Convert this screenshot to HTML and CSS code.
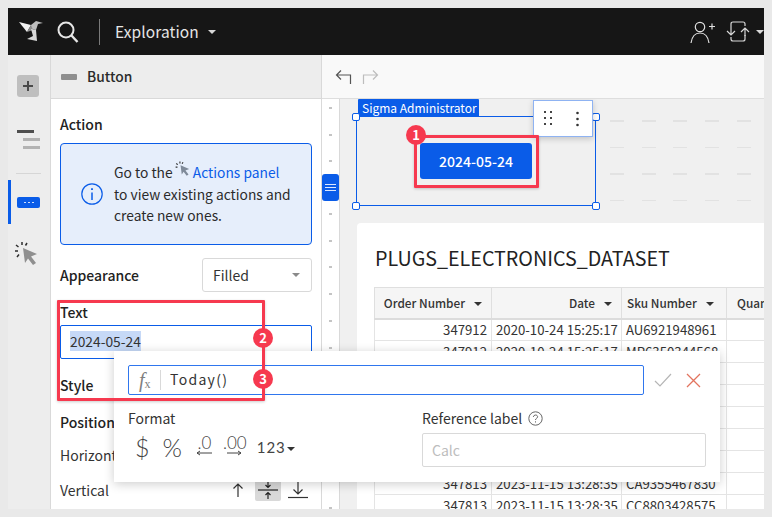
FILE: index.html
```html
<!DOCTYPE html>
<html lang="en">
<head>
  <meta charset="UTF-8" />
  <title>Exploration</title>
  <link rel="stylesheet" href="styles.css">
</head>
<body>
  <div class="app">

    <header class="topbar">
      <svg class="logo" width="25" height="22" viewBox="0 0 25 22">
        <path d="M0 2 L12 5 L8 12 Z" fill="#f2f2f2"/>
        <path d="M12 5 L17 1 L24 3 L19 4 L17 10 L12 9 Z" fill="#bdbdbd"/>
        <path d="M8 12 L12 5 L14 10 Z" fill="#8c8c8c"/>
        <path d="M12 9 L17 10 L18 21 L8 19 L14 16 Z" fill="#d9d9d9"/>
      </svg>
      <svg class="search" width="22" height="24" viewBox="0 0 22 24" fill="none" stroke="#e6e6e6" stroke-width="2">
        <circle cx="9" cy="9" r="7.5"/>
        <path d="M14.5 14.5 L20.5 21" stroke-width="2.4"/>
      </svg>
      <span class="topbar-sep"></span>
      <span class="doc-title">Exploration</span>
      <span class="caret caret-light"></span>
      <span class="topbar-right">
        <svg width="27" height="24" viewBox="0 0 27 24" fill="none" stroke="#e0e0e0" stroke-width="1.2">
          <circle cx="10" cy="7" r="4.7"/>
          <path d="M1 23 C2 16 6 13 10 13 C14 13 18 16 19 23"/>
          <path d="M19 6.5 H25 M22 3.5 V9.5"/>
        </svg>
        <svg class="sync-icon" width="24" height="22" viewBox="0 0 24 22" fill="none" stroke="#d8d8d8" stroke-width="1.2">
          <path d="M5 6 V3 Q5 1 7 1 H17 Q19 1 19 3 V5"/>
          <path d="M19 14 V18 Q19 20 17 20 H7 Q5 20 5 18 V16"/>
          <path d="M1 10 L5 14 L9 10 M5 14 V6"/>
          <path d="M15 11 L19 7 L23 11 M19 7 V15"/>
        </svg>
        <span class="caret caret-light"></span>
      </span>
    </header>

    <div class="main">
      <nav class="rail">
        <div class="rail-add">
          <svg width="12" height="12" viewBox="0 0 12 12"><path d="M6 1 V11 M1 6 H11" stroke="#4a4a4a" stroke-width="2"/></svg>
        </div>
        <div class="rail-outline">
          <span class="line-dark"></span>
          <span class="line-grey"></span>
          <span class="line-grey"></span>
        </div>
        <div class="rail-divider"></div>
        <div class="rail-active">
          <span class="rail-button"><i></i><i></i><i></i></span>
        </div>
        <svg class="rail-click" width="24" height="26" viewBox="0 0 24 26">
          <path d="M8 7 L22 13 L16 15.5 L21 22 L18 24 L13 17.5 L10 22 Z" fill="#8f8f8f"/>
          <path d="M7 1 V4 M1 4 L3.5 6 M0 10 H3 M2 16 L4 13.5 M12 2 L10.5 4.5" stroke="#2e2e2e" stroke-width="1.5" fill="none"/>
        </svg>
      </nav>

      <aside class="panel">
        <div class="panel-head">
          <span class="panel-head-icon"></span>
          <span class="panel-head-title">Button</span>
        </div>
        <div class="panel-body">
          <div class="label label-action">Action</div>
          <div class="info-box">
            <svg class="info-icon" width="22" height="22" viewBox="0 0 22 22" fill="none" stroke="#0a5ce8" stroke-width="1.2">
              <circle cx="11" cy="11" r="10.2"/>
              <path d="M11 9.5 V17" stroke-width="1.5"/>
              <path d="M11 5.2 V7" stroke-width="1.8"/>
            </svg>
            <div class="info-text">
              Go to the
              <svg class="inline-click" width="16" height="16" viewBox="0 0 24 26">
                <path d="M8 7 L22 13 L16 15.5 L21 22 L18 24 L13 17.5 L10 22 Z" fill="#7f8a99"/>
                <path d="M7 1 V4 M1 4 L3.5 6 M0 10 H3 M12 2 L10.5 4.5" stroke="#2e2e2e" stroke-width="1.8" fill="none"/>
              </svg>
              <span class="link">Actions panel</span><br>
              to view existing actions and<br>
              create new ones.
            </div>
          </div>
          <div class="row row-appearance">
            <span class="label">Appearance</span>
            <div class="select">Filled<span class="caret caret-grey"></span></div>
          </div>
          <div class="label label-text">Text</div>
          <div class="text-input"><span class="selected">2024-05-24</span></div>
          <div class="label label-style">Style</div>
          <div class="label label-position">Position</div>
          <div class="row row-horizontal"><span class="plain">Horizontal</span></div>
          <div class="row row-vertical">
            <span class="plain">Vertical</span>
            <span class="align-icons">
              <span class="align-btn">
                <svg width="14" height="16" viewBox="0 0 14 16" fill="none" stroke="#333" stroke-width="1.2"><path d="M7 15 V2 M2.5 6.5 L7 2 L11.5 6.5"/></svg>
              </span>
              <span class="align-btn align-on">
                <svg width="20" height="20" viewBox="0 0 20 20" fill="none" stroke="#222" stroke-width="1.2"><path d="M0 10 H20"/><path d="M10 1 V7 M7.5 5 L10 7.5 L12.5 5"/><path d="M10 19 V13 M7.5 15 L10 12.5 L12.5 15"/></svg>
              </span>
              <span class="align-btn">
                <svg width="20" height="18" viewBox="0 0 20 18" fill="none" stroke="#333" stroke-width="1.2"><path d="M0 16.5 H20"/><path d="M10 1 V13 M5.5 8.5 L10 13 L14.5 8.5"/></svg>
              </span>
            </span>
          </div>
        </div>
      </aside>

      <section class="content">
        <div class="toolbar">
          <svg width="17" height="16" viewBox="0 0 17 16" fill="none" stroke="#555" stroke-width="1.2"><path d="M6 1.5 L1.5 6 L6 10.5 M1.5 6 H15.5 V15"/></svg>
          <svg width="17" height="16" viewBox="0 0 17 16" fill="none" stroke="#bdbdbd" stroke-width="1.2"><path d="M11 1.5 L15.5 6 L11 10.5 M15.5 6 H1.5 V15"/></svg>
        </div>
        <div class="work">
          <div class="strip">
            <i></i><i></i><i></i>
            <span class="strip-btn"><b></b><b></b><b></b></span>
            <i></i><i></i><i></i><i></i><i></i><i></i><i></i><i></i><i></i><i></i><i></i><i></i><i></i><i></i>
          </div>
          <div class="canvas">
            <div class="top-row">
              <div class="element">
                <span class="element-tag">Sigma Administrator</span>
                <span class="handle h-tl"></span><span class="handle h-tr"></span>
                <span class="handle h-bl"></span><span class="handle h-br"></span>
                <div class="element-tools">
                  <svg width="9" height="16" viewBox="0 0 9 16" fill="#444"><rect x="0" y="0" width="2" height="2"/><rect x="6" y="0" width="2" height="2"/><rect x="0" y="6" width="2" height="2"/><rect x="6" y="6" width="2" height="2"/><rect x="0" y="12" width="2" height="2"/><rect x="6" y="12" width="2" height="2"/></svg>
                  <svg width="3" height="16" viewBox="0 0 3 16" fill="#333"><circle cx="1.5" cy="2" r="1.3"/><circle cx="1.5" cy="8" r="1.3"/><circle cx="1.5" cy="14" r="1.3"/></svg>
                </div>
                <button class="date-button">2024-05-24</button>
              </div>
              <div class="grid-dashes">
                <i></i><i></i><i></i><i></i><i></i>
                <i></i><i></i><i></i><i></i><i></i>
                <i></i><i></i><i></i><i></i><i></i>
                <i></i><i></i><i></i><i></i><i></i>
              </div>
            </div>

            <div class="card">
              <h2 class="card-title">PLUGS_ELECTRONICS_DATASET</h2>
              <table class="data">
                <colgroup>
                  <col class="c-order"><col class="c-date"><col class="c-sku"><col class="c-qty">
                </colgroup>
                <thead>
                  <tr>
                    <th class="num">Order Number<span class="caret caret-dark"></span></th>
                    <th class="num">Date<span class="caret caret-dark"></span></th>
                    <th>Sku Number<span class="caret caret-dark"></span></th>
                    <th class="qty">Quantity</th>
                  </tr>
                </thead>
                <tbody>
                  <tr><td class="num">347912</td><td class="num">2020-10-24 15:25:17</td><td>AU6921948961</td><td></td></tr>
                  <tr><td class="num">347912</td><td class="num">2020-10-24 15:25:17</td><td>MP6350344568</td><td></td></tr>
                  <tr><td></td><td></td><td></td><td></td></tr>
                  <tr><td></td><td></td><td></td><td></td></tr>
                  <tr><td></td><td></td><td></td><td></td></tr>
                  <tr><td></td><td></td><td></td><td></td></tr>
                  <tr><td></td><td></td><td></td><td></td></tr>
                  <tr><td class="num">347813</td><td class="num">2023-11-15 13:28:35</td><td>CA9355467830</td><td></td></tr>
                  <tr><td class="num">347813</td><td class="num">2023-11-15 13:28:35</td><td>CC8803428575</td><td></td></tr>
                </tbody>
              </table>
            </div>
          </div>
        </div>
      </section>
    </div>

    <!-- formula popup sits over the panel and the table -->
    <div class="popup">
      <div class="formula-row">
        <div class="formula">
          <span class="fx">f<sub>x</sub></span>
          <span class="formula-text">Today()</span>
        </div>
        <svg class="check" width="18" height="14" viewBox="0 0 18 14" fill="none" stroke="#b5b5b5" stroke-width="1.2"><path d="M1 8 L6 13 L17 1"/></svg>
        <svg class="cancel" width="15" height="15" viewBox="0 0 15 15" fill="none" stroke="#e2745f" stroke-width="1.3"><path d="M1 1 L14 14 M14 1 L1 14"/></svg>
      </div>
      <div class="popup-cols">
        <div class="format-col">
          <div class="popup-label">Format</div>
          <div class="format-icons">
            <span class="fmt fmt-dollar">$</span>
            <span class="fmt fmt-percent">%</span>
            <span class="fmt-dec fmt-dec-one">.0
              <svg width="17" height="6" viewBox="0 0 17 6" fill="none" stroke="#444"><path d="M4 1 L1 3 L4 5 M1 3 H16"/></svg>
            </span>
            <span class="fmt-dec fmt-dec-two">.00
              <svg width="15" height="6" viewBox="0 0 15 6" fill="none" stroke="#444"><path d="M11 1 L14 3 L11 5 M14 3 H0"/></svg>
            </span>
            <span class="fmt-num">123<span class="caret caret-dark"></span></span>
          </div>
        </div>
        <div class="ref-col">
          <div class="popup-label">Reference label
            <svg class="help" width="15" height="15" viewBox="0 0 15 15" fill="none" stroke="#666"><circle cx="7.5" cy="7.5" r="6.7"/><path d="M5.4 6 C5.4 3.4 9.6 3.4 9.6 5.8 C9.6 7.4 7.5 7.2 7.5 9"/><path d="M7.5 10.3 V11.5"/></svg>
          </div>
          <div class="ref-input">Calc</div>
        </div>
      </div>
    </div>

    <!-- red callouts drawn on top of the screenshot -->
    <div class="callout callout-one"></div>
    <div class="callout callout-two"></div>
    <span class="badge badge-one">1</span>
    <span class="badge badge-two">2</span>
    <span class="badge badge-three">3</span>
  </div>
</body>
</html>
```

FILE: styles.css
```css
* {
  box-sizing: border-box;
}

body {
  margin: 8px;
  background: #e9e9e9;
  font-family: "Noto Sans CJK SC", "Noto Sans", sans-serif;
  color: #2b2b2b;
  font-size: 14px;
}

.app {
  position: relative;
  width: 756px;
  height: 501px;
  overflow: hidden;
  background: #fff;
  display: flex;
  flex-direction: column;
  box-shadow: 0 1px 3px rgba(0,0,0,0.12);
}

/* carets */
.caret {
  display: inline-block;
  width: 0;
  height: 0;
  border-left: 4px solid transparent;
  border-right: 4px solid transparent;
  border-top: 4px solid #333;
}

.caret-light { border-top-color: #d8d8d8; }
.caret-grey { border-top-color: #8a8a8a; }
.caret-dark { border-top-color: #333; }

/* top bar */
.topbar {
  height: 47px;
  flex: none;
  background: #161616;
  display: flex;
  align-items: center;
  color: #e6e6e6;
  padding-left: 11px;
}

.logo { margin-top: -1px; }

.search {
  margin-left: 13px;
  margin-top: 2px;
}

.topbar-sep {
  width: 1px;
  height: 26px;
  background: #7a7a7a;
  margin-left: 20px;
}

.doc-title {
  font-size: 15.5px;
  line-height: 20px;
  margin-left: 15px;
  margin-top: -2px;
  letter-spacing: 0.1px;
}

.doc-title + .caret {
  margin-left: 9px;
}

.topbar-right {
  margin-left: auto;
  display: flex;
  align-items: center;
}

.sync-icon { margin-left: 9px; }

.topbar-right .caret { margin-left: 6px; }

/* main row */
.main {
  flex: 1;
  display: flex;
  min-height: 0;
}

/* left rail */
.rail {
  width: 43px;
  flex: none;
  background: #ededed;
  border-right: 1px solid #d9d9d9;
  display: flex;
  flex-direction: column;
  align-items: flex-start;
  padding-top: 20px;
}

.rail-add {
  width: 22px;
  height: 22px;
  margin-left: 9px;
  background: #bfbfbf;
  border-radius: 3px;
  display: flex;
  align-items: center;
  justify-content: center;
}

.rail-outline {
  margin-left: 9px;
  margin-top: 33px;
  width: 23px;
  display: flex;
  flex-direction: column;
  gap: 5px;
}

.line-dark {
  width: 17px;
  height: 3px;
  background: #4f4f4f;
}

.line-grey {
  width: 17px;
  height: 3px;
  margin-left: 6px;
  background: #b3b3b3;
}

.rail-divider {
  width: 25px;
  height: 1px;
  background: #d6d6d6;
  margin: 24px 0 0 8px;
}

.rail-active {
  margin-top: 6px;
  width: 100%;
  height: 44px;
  border-left: 3px solid #0a5ce8;
  display: flex;
  align-items: center;
  padding-left: 6px;
}

.rail-button {
  width: 23px;
  height: 11px;
  background: #0a5ce8;
  border-radius: 2px;
  display: flex;
  align-items: center;
  justify-content: center;
  gap: 2px;
}

.rail-button i {
  width: 2px;
  height: 1px;
  background: #cfe0ff;
}

.rail-click {
  margin: 17px 0 0 7px;
}

/* settings panel */
.panel {
  width: 271px;
  flex: none;
  border-right: 1px solid #d9d9d9;
  display: flex;
  flex-direction: column;
}

.panel-head {
  height: 44px;
  flex: none;
  background: #ededed;
  border-bottom: 1px solid #d9d9d9;
  display: flex;
  align-items: center;
  padding-left: 10px;
}

.panel-head-icon {
  width: 16px;
  height: 6px;
  background: #8f8f8f;
  border-radius: 1px;
}

.panel-head-title {
  margin-left: 10px;
  margin-top: -1px;
  font-weight: 500;
  font-size: 13.8px;
}

.panel-body {
  flex: 1;
  padding: 15px 9px 0 9px;
}

.label {
  font-weight: 500;
  font-size: 14px;
  line-height: 20px;
  color: #222;
}

.plain {
  font-size: 14px;
  line-height: 20px;
  color: #333;
}

.row {
  display: flex;
  align-items: center;
  justify-content: space-between;
}

.info-box {
  margin-top: 9px;
  height: 102px;
  background: #e6eefb;
  border: 1px solid #0a5ce8;
  border-radius: 4px;
  display: flex;
  align-items: center;
  padding-left: 20px;
}

.info-icon {
  flex: none;
}

.info-text {
  margin-left: 11px;
  font-size: 13.8px;
  line-height: 21.5px;
  color: #2b2b2b;
}

.inline-click {
  vertical-align: 1px;
  margin: 0 -1px;
}

.link {
  color: #0a5ce8;
}

.row-appearance {
  margin-top: 13px;
}

.select {
  width: 110px;
  height: 34px;
  border: 1px solid #d9d9d9;
  border-radius: 3px;
  display: flex;
  align-items: center;
  justify-content: space-between;
  padding: 0 11px 0 10px;
  color: #333;
}

.label-text {
  margin-top: 10px;
}

.text-input {
  margin-top: 3px;
  height: 34px;
  border: 1px solid #0a5ce8;
  border-radius: 2px;
  padding: 5px 9px;
  line-height: 20px;
  font-size: 13.8px;
}

.selected {
  background: #c6d9f7;
  display: inline-block;
  color: #333;
}

.label-style {
  margin-top: 16px;
}

.label-position {
  margin-top: 17px;
}

.row-horizontal {
  margin-top: 13px;
}

.row-vertical {
  margin-top: 11px;
  height: 28px;
}

.align-icons {
  display: flex;
  align-items: center;
  margin-right: 1px;
}

.align-btn {
  width: 26px;
  height: 22px;
  margin-left: 4px;
  display: flex;
  align-items: center;
  justify-content: center;
  border-radius: 2px;
}

.align-on {
  background: #d9d9d9;
}

/* right side */
.content {
  flex: 1;
  min-width: 0;
  display: flex;
  flex-direction: column;
}

.toolbar {
  height: 44px;
  flex: none;
  background: #f9f9f9;
  border-bottom: 1px solid #dedede;
  display: flex;
  align-items: center;
  gap: 10px;
  padding-left: 13px;
}

.work {
  flex: 1;
  min-height: 0;
  display: flex;
}

/* dotted strip between panel and canvas */
.strip {
  width: 18px;
  flex: none;
  overflow: hidden;
  border-right: 1px solid #d9d9d9;
  background: #fff;
  display: flex;
  flex-direction: column;
  align-items: center;
  padding-top: 8px;
}

.strip i {
  width: 3px;
  height: 2px;
  flex: none;
  background: #c4c4c4;
  margin-bottom: 24.7px;
}

.strip-btn {
  width: 17px;
  height: 27px;
  flex: none;
  margin: -13px 0 12px;
  background: #0a5ce8;
  border-radius: 3px;
  display: flex;
  flex-direction: column;
  align-items: center;
  justify-content: center;
  gap: 2px;
}

.strip-btn b {
  width: 11px;
  height: 1px;
  background: #dbe7ff;
}

.canvas {
  flex: 1;
  min-width: 0;
  overflow: hidden;
  background: #f0f0f0;
  padding: 17px 0 0 16px;
}

.top-row {
  display: flex;
}

.element {
  position: relative;
  width: 240px;
  height: 90px;
  border: 1px solid #0a5ce8;
  display: flex;
  align-items: flex-start;
  justify-content: center;
  padding-top: 26px;
}

.element-tag {
  position: absolute;
  left: 1px;
  top: -18px;
  height: 18px;
  width: 121px;
  background: #0a5ce8;
  color: #fff;
  font-size: 12px;
  line-height: 18px;
  padding-left: 4px;
  white-space: nowrap;
  border-radius: 1px 1px 0 0;
}

.handle {
  position: absolute;
  width: 8px;
  height: 8px;
  background: #fff;
  border: 1px solid #0a5ce8;
  border-radius: 2px;
}

.h-tl { left: -5px; top: -4px; }
.h-tr { right: -5px; top: -4px; }
.h-bl { left: -5px; bottom: -5px; }
.h-br { right: -5px; bottom: -5px; }

.element-tools {
  position: absolute;
  left: 176px;
  top: -17px;
  width: 60px;
  height: 37px;
  background: #fff;
  border: 1px solid #8fb3f2;
  box-shadow: 0 2px 6px rgba(0,0,0,0.18);
  display: flex;
  align-items: center;
  gap: 23px;
  padding-left: 10px;
}

.date-button {
  width: 112px;
  height: 36px;
  background: #0a5ce8;
  color: #fff;
  border: none;
  border-radius: 3px;
  font-family: inherit;
  font-size: 14px;
  font-weight: 500;
}

.grid-dashes {
  margin: 4px 0 0 14px;
  display: grid;
  grid-template-columns: repeat(5, 14px);
  column-gap: 17.7px;
  row-gap: 25px;
  align-content: start;
}

.grid-dashes i {
  height: 1.5px;
  background: #e2e2e2;
}

.card {
  margin: 17px 0 0 1px;
  background: #fff;
  border-radius: 4px 0 0 0;
  padding: 21px 0 0 17px;
  height: 300px;
  overflow: hidden;
}

.card-title {
  margin: 0 0 0 1px;
  font-size: 19.7px;
  font-weight: 400;
  line-height: 28px;
  color: #222;
}

.data {
  margin-top: 15px;
  border-collapse: collapse;
  table-layout: fixed;
  width: 420px;
  font-size: 13.2px;
  color: #333;
}

.c-order { width: 117px; }
.c-date { width: 130px; }
.c-sku { width: 105px; }
.c-qty { width: 68px; }

.data th {
  height: 31px;
  background: #f5f5f5;
  border: 1px solid #dfdfdf;
  border-bottom: 2px solid #dcdcdc;
  font-size: 11.8px;
  font-weight: 500;
  text-align: left;
  padding: 0 5px;
  white-space: nowrap;
  overflow: hidden;
}

.data th .caret {
  margin-left: 9px;
  vertical-align: 2px;
}

.data th.num {
  text-align: right;
  padding-right: 9px;
}

.data th.qty {
  padding-left: 10px;
}

.data td {
  height: 22px;
  border: 1px solid #e4e4e4;
  padding: 0 4px;
  line-height: 20px;
  white-space: nowrap;
  overflow: hidden;
}

.data td.num {
  text-align: right;
}

/* formula popup */
.popup {
  position: absolute;
  left: 106px;
  top: 343px;
  width: 606px;
  height: 131px;
  background: #fff;
  box-shadow: 0 2px 10px rgba(0,0,0,0.2);
  padding: 14px 0 0 14px;
}

.formula-row {
  display: flex;
  align-items: center;
}

.formula {
  width: 516px;
  height: 30px;
  border: 1.5px solid #2f76ee;
  border-radius: 2px;
  display: flex;
  align-items: center;
  padding-left: 10px;
}

.fx {
  width: 22px;
  height: 20px;
  border-right: 1px solid #d9d9d9;
  color: #808080;
  font-family: "Liberation Serif", serif;
  font-style: italic;
  font-size: 20px;
  line-height: 20px;
}

.fx sub {
  font-size: 12px;
  font-style: normal;
  vertical-align: -1px;
  line-height: 0;
}

.formula-text {
  margin-left: 9px;
  margin-top: -2px;
  font-size: 14px;
  letter-spacing: 1.3px;
  color: #333;
}

.check { margin-left: 10px; }
.cancel { margin-left: 14px; }

.popup-cols {
  display: flex;
  margin-top: 13px;
}

.format-col {
  width: 294px;
}

.popup-label {
  font-size: 14px;
  line-height: 20px;
  color: #333;
  display: flex;
  align-items: center;
}

.format-icons {
  display: flex;
  align-items: center;
  height: 30px;
  margin-top: 4px;
  color: #444;
}

.fmt {
  font-family: "Lato", sans-serif;
  font-size: 25px;
  font-weight: 300;
  line-height: 26px;
}

.fmt-dollar { margin-left: 7px; }
.fmt-percent { margin-left: 13px; }

.fmt-dec {
  font-family: "Lato", sans-serif;
  font-size: 17px;
  font-weight: 300;
  line-height: 15px;
  height: 24px;
  display: flex;
  flex-direction: column;
  align-items: center;
}

.fmt-dec-one { margin-left: 14px; }
.fmt-dec-two { margin-left: 10px; }

.fmt-num {
  margin-left: 10px;
  font-family: "Lato", sans-serif;
  font-size: 15px;
  font-weight: 400;
  letter-spacing: 1px;
  color: #444;
}

.fmt-num .caret {
  margin-left: 1px;
  vertical-align: 2px;
}

.ref-col {
  width: 284px;
}

.help { margin-left: 6px; }

.ref-input {
  margin-top: 5px;
  height: 34px;
  border: 1px solid #d9d9d9;
  border-radius: 2px;
  color: #bdbdbd;
  line-height: 32px;
  padding-left: 9px;
}

/* red callouts */
.callout {
  position: absolute;
  border: 3px solid #f6394f;
  border-radius: 1px;
  box-shadow: 0 1px 3px rgba(0,0,0,0.2);
}

.callout-one {
  left: 406px;
  top: 127px;
  width: 125px;
  height: 53px;
}

.callout-two {
  left: 49px;
  top: 292px;
  width: 208px;
  height: 101px;
}

.badge {
  position: absolute;
  width: 20px;
  height: 20px;
  border-radius: 50%;
  background: #f6394f;
  color: #fff;
  font-size: 13px;
  font-weight: 700;
  line-height: 20px;
  text-align: center;
}

.badge-one { left: 398px; top: 117px; }
.badge-two { left: 245px; top: 320px; }
.badge-three { left: 245px; top: 361px; }
```
